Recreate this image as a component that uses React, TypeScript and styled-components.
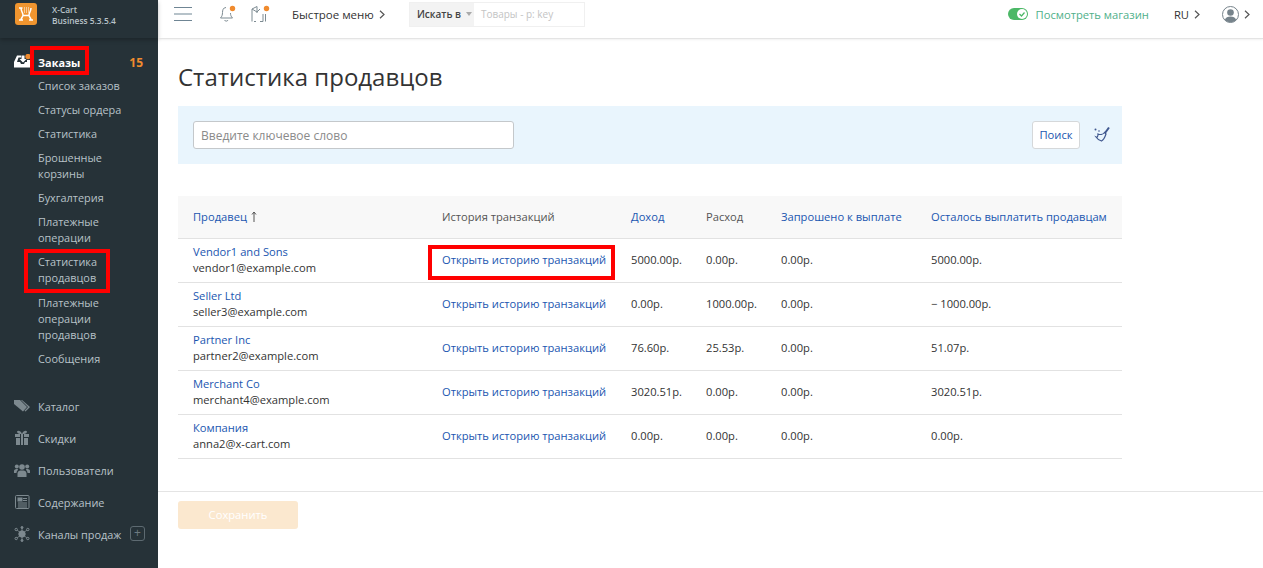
import { ReactNode } from 'react';
import styled, { createGlobalStyle } from 'styled-components';

const GlobalStyle = createGlobalStyle`
  html, body {
    margin: 0;
    padding: 0;
    background: #fff;
    font-family: "Open Sans", "Liberation Sans", sans-serif;
    font-size: 11.2px;
    color: #333;
  }
`;

const Page = styled.div`
  display: flex;
  width: 1263px;
  height: 568px;
  overflow: hidden;
`;

const Sidebar = styled.aside`
  width: 158px;
  flex: none;
  background: #263238;
  color: #b8c2c8;
  font-size: 10.9px;
`;

const Brand = styled.div`
  display: flex;
  align-items: center;
  height: 38px;
  padding: 0 0 10px 15px;
  box-sizing: border-box;
  gap: 15px;
  box-shadow: 0 2px 4px rgba(0, 0, 0, 0.25);
`;

const BrandText = styled.div`
  padding-top: 2px;
  font-size: 8.4px;
  font-weight: 600;
  line-height: 11px;
  color: #b8c2c8;
`;

const Menu = styled.nav`
  padding-top: 8px;
`;

const MainItem = styled.div<{ $active?: boolean }>`
  position: relative;
  display: flex;
  align-items: center;
  height: 32px;
  padding-left: 38px;
  color: ${(p) => (p.$active ? '#fff' : '#b8c2c8')};
  font-weight: ${(p) => (p.$active ? 700 : 400)};
`;

const MainIcon = styled.span`
  position: absolute;
  left: 14px;
  top: 8px;
  width: 16px;
  height: 16px;
`;

const Count = styled.span`
  margin-left: auto;
  margin-right: 15px;
  color: #f08b2e;
  font-size: 12px;
  font-weight: 700;
`;

const SubList = styled.div`
  padding: 0 0 19px 38px;
  margin-top: -4px;
`;

const SubItem = styled.div<{ $wide?: boolean }>`
  padding: ${(p) => (p.$wide ? 5 : 4)}px 0 4px;
  line-height: 16px;
  white-space: pre;
`;

const Marked = styled.span<{ $inset: string }>`
  position: relative;
  &::after {
    content: '';
    position: absolute;
    inset: ${(p) => p.$inset};
    border: 4px solid #f00;
    pointer-events: none;
  }
`;

const BlockMarked = styled(Marked)`
  display: inline-block;
`;

const PlusBox = styled.span`
  position: absolute;
  left: 130px;
  top: 8px;
  width: 13px;
  height: 13px;
  border: 1px solid #5d6a71;
  border-radius: 3px;
  color: #6d7a81;
  font-size: 12px;
  line-height: 12px;
  text-align: center;
`;

const Main = styled.div`
  flex: 1;
  display: flex;
  flex-direction: column;
  min-width: 0;
`;

const TopBar = styled.header`
  display: flex;
  align-items: center;
  height: 39px;
  padding: 0 0 10px 16px;
  box-sizing: border-box;
  border-bottom: 1px solid #e4e4e4;
  box-shadow: 0 1px 2px rgba(0, 0, 0, 0.06);
  flex: none;
`;

const IconSlot = styled.span<{ $ml?: number }>`
  display: inline-flex;
  margin-left: ${(p) => p.$ml ?? 0}px;
`;

const QuickMenu = styled.span`
  margin-left: 22px;
  color: #333;
  white-space: nowrap;
  font-size: 11.5px;
`;

const Chevron = styled.svg`
  width: 6px;
  height: 9px;
  margin-left: 5px;
  fill: none;
  stroke: #555;
  stroke-width: 1.2;
`;

const SearchBox = styled.div`
  display: flex;
  margin-left: 24px;
  height: 25px;
  width: 176px;
  border: 1px solid #f0f0f0;
  box-sizing: border-box;
  font-size: 10px;
`;

const SearchScope = styled.div`
  width: 64px;
  display: flex;
  align-items: center;
  padding-left: 7px;
  box-sizing: border-box;
  background: #f3f3f3;
  font-weight: 600;
  color: #444;
  white-space: nowrap;
`;

const Caret = styled.span`
  margin-left: 5px;
  border: 3.5px solid transparent;
  border-top: 4px solid #aaa;
  border-bottom: 0;
`;

const SearchHint = styled.div`
  display: flex;
  align-items: center;
  padding-left: 7px;
  color: #c4c4c4;
  white-space: nowrap;
`;

const TopRight = styled.div`
  margin-left: auto;
  display: flex;
  align-items: center;
  padding-right: 13px;
`;

const ShopLink = styled.span`
  margin-left: 8px;
  color: #4fb08a;
  white-space: nowrap;
`;

const Lang = styled.span`
  margin-left: 25px;
  color: #333;
`;

const Content = styled.main`
  padding: 0 141px 0 20px;
  flex: 1;
`;

const Title = styled.h1`
  margin: 21px 0 12px;
  font-size: 24px;
  line-height: 34px;
  font-weight: 400;
  color: #333;
`;

const FilterPanel = styled.div`
  display: flex;
  align-items: center;
  height: 58px;
  padding: 0 11px 1px 15px;
  background: #e9f5fd;
  box-sizing: border-box;
`;

const KeywordInput = styled.div`
  width: 321px;
  height: 28px;
  box-sizing: border-box;
  border: 1px solid #c4c8cb;
  border-radius: 3px;
  background: #fff;
  color: #8a8a8a;
  font-size: 12px;
  line-height: 27px;
  padding-left: 7px;
`;

const SearchButton = styled.div`
  margin-left: auto;
  width: 48px;
  height: 28px;
  box-sizing: border-box;
  border: 1px solid #d5d8da;
  border-radius: 3px;
  background: #fff;
  color: #1a56b0;
  font-size: 11.2px;
  line-height: 26px;
  text-align: center;
`;

const Table = styled.table`
  width: 944px;
  margin-top: 32px;
  border-collapse: collapse;
  table-layout: fixed;
`;

const Th = styled.th<{ $link?: boolean }>`
  height: 42px;
  padding: 0 0 0 15px;
  box-sizing: border-box;
  background: #f8f8f8;
  border-bottom: 1px solid #e2e2e2;
  text-align: left;
  font-weight: 400;
  font-size: 11.16px;
  white-space: nowrap;
  color: ${(p) => (p.$link ? '#1a56b0' : '#555')};
`;

const Td = styled.td`
  height: 44px;
  padding: 0 0 0 15px;
  box-sizing: border-box;
  border-bottom: 1px solid #e2e2e2;
  font-size: 11.16px;
  line-height: 16px;
  white-space: nowrap;
  color: #333;
`;

const VendorName = styled.div`
  color: #1a56b0;
`;

const HistoryLink = styled.span`
  color: #1a56b0;
`;

const SortArrow = styled.svg`
  width: 6px;
  height: 11px;
  margin-left: 4px;
  vertical-align: -1px;
  fill: none;
  stroke: #555;
`;

const Footer = styled.div`
  margin: 32px -141px 0 -20px;
  padding: 9px 0 0 20px;
  border-top: 1px solid #e4e4e4;
`;

const SaveButton = styled.div`
  width: 120px;
  height: 28px;
  border-radius: 3px;
  background: #fbe8cf;
  color: #fff;
  font-size: 11.2px;
  line-height: 28px;
  text-align: center;
`;

const LogoIcon = () => (
  <svg width="22" height="22" viewBox="0 0 22 22">
    <rect width="22" height="22" rx="3" fill="#f0952f" />
    <path d="M4 5h3.500M6 5c0 3 2 5 2 7 0 2-2 3-2 5M16 5c0 3-2 5-2 7 0 2 2 3 2 5M4 17h4M14 17h4M8 12.500h6" fill="none" stroke="#fff" strokeWidth="1.5" />
    <path d="M9 5h5M9 7h5M9 9h5" stroke="#fff" strokeWidth="1" strokeDasharray="1 1" />
  </svg>
);

const OrdersIcon = () => (
  <svg width="20" height="16" viewBox="0 0 20 16">
    <path d="M3 1.500h4v2H4.500L3 8h3l1 2h3l1-2h2V6h3v7.500H0V8z" fill="#fff" />
    <path d="M7.500 1.500h3v3.500h2L9 8.500 5.500 5h2z" fill="#fff" />
    <circle cx="14" cy="2.500" r="2.700" fill="#f08b2e" />
  </svg>
);

const TagIcon = () => (
  <svg width="16" height="16" viewBox="0 0 16 16" fill="#7d898f">
    <path d="M0 2h6l7 7-4 4.500L0 6z" />
    <path d="M8 2l8 7-4.500 4.500-1-.8L14 9 7 2z" />
  </svg>
);

const GiftIcon = () => (
  <svg width="16" height="16" viewBox="0 0 16 16" fill="#7d898f">
    <path d="M1 4h5v3H1zM10 4h5v3h-5zM2 8h4v7H2zM10 8h4v7h-4zM7 4h2v11H7z" />
    <path d="M3 1.500C4 0 7 1 8 4 5 4 3 3.500 3 1.500zM13 1.500C12 0 9 1 8 4c3 0 5-.5 5-2.500z" />
  </svg>
);

const UsersIcon = () => (
  <svg width="16" height="16" viewBox="0 0 16 16" fill="#7d898f">
    <circle cx="8" cy="5" r="2.800" />
    <circle cx="2.800" cy="4.500" r="2" />
    <circle cx="13.200" cy="4.500" r="2" />
    <path d="M3.500 15v-3.500C3.500 9 5.500 8.500 8 8.500s4.500.5 4.500 3V15zM0 11V9c0-1.500 1.500-2 3.500-2 .5 0 .8.5 0 1.500-.5.5-1 1.500-1 2.500zM16 11V9c0-1.500-1.500-2-3.500-2-.5 0-.8.5 0 1.500.5.5 1 1.500 1 2.500z" />
  </svg>
);

const NewsIcon = () => (
  <svg width="16" height="16" viewBox="0 0 16 16" fill="none" stroke="#7d898f">
    <rect x="1.500" y="1.500" width="13.500" height="13" rx="1" />
    <rect x="4" y="4" width="4" height="3" fill="#7d898f" />
    <path d="M9 4.500h4M9 6.500h4M4 9h9M4 11h9M4 13h9" />
  </svg>
);

const HubIcon = () => (
  <svg width="16" height="16" viewBox="0 0 16 16" fill="none" stroke="#7d898f">
    <circle cx="8" cy="8" r="3.200" fill="#7d898f" />
    <path d="M8 8 3 4M8 8l5-4M8 8l-5 4M8 8l5 4M8 8V2M8 8v6" strokeWidth="0.8" />
    <circle cx="2.200" cy="3.500" r="1.200" />
    <circle cx="13.800" cy="3.500" r="1.200" />
    <circle cx="2.200" cy="12.500" r="1.200" />
    <circle cx="13.800" cy="12.500" r="1.200" />
    <circle cx="8" cy="1.500" r="1" fill="#7d898f" />
    <circle cx="8" cy="14.500" r="1" fill="#7d898f" />
  </svg>
);

const BurgerIcon = () => (
  <svg width="18" height="16" viewBox="0 0 18 16" stroke="#6f8594" strokeWidth="1.2">
    <path d="M0 1.500h18M0 8h18M0 14.500h18" />
  </svg>
);

const BellIcon = () => (
  <svg width="18" height="18" viewBox="0 0 18 18" fill="none">
    <path d="M7 2.500c-3 0-3.500 3-3.500 5s-.5 4-2 5.500h12c-1.500-1.500-2-3-2-5M5.500 15c.5 1.500 3 1.500 3.500 0" stroke="#7d8b92" />
    <circle cx="13.500" cy="3.500" r="2.700" fill="#f08b2e" />
  </svg>
);

const ChartIcon = () => (
  <svg width="19" height="18" viewBox="0 0 19 18" fill="none" stroke="#7d8b92">
    <path d="M1 16.500V4l5-2.500V8M1 4l5 3 3-3M5 16.500H3M12 9v7.500h-3M14.500 9v7.500" />
    <circle cx="15.500" cy="3.500" r="2.700" fill="#f08b2e" stroke="none" />
  </svg>
);

const Arrow = () => (
  <Chevron viewBox="0 0 6 9">
    <path d="M1 .8 5 4.500 1 8.200" />
  </Chevron>
);

const SwitchIcon = () => (
  <svg width="20" height="12" viewBox="0 0 20 12">
    <rect width="20" height="12" rx="6" fill="#4cb867" />
    <circle cx="14" cy="6" r="5" fill="#fff" />
    <path d="M11.500 6l2 2 3-3.500" fill="none" stroke="#4cb867" strokeWidth="1.2" />
  </svg>
);

const UserIcon = () => (
  <svg width="17" height="17" viewBox="0 0 17 17">
    <circle cx="8.500" cy="8.500" r="8" fill="#fff" stroke="#76838b" />
    <circle cx="8.500" cy="6.500" r="3.300" fill="#76838b" />
    <path d="M2.800 14c1-3 3-3.500 5.700-3.500s4.700.5 5.700 3.500c-3 3-8.400 3-11.400 0z" fill="#76838b" />
  </svg>
);

const BroomIcon = () => (
  <svg width="18" height="18" viewBox="0 0 18 18" fill="none" stroke="#40588f" strokeWidth="1.2">
    <path d="M5 8c2 1 5 .5 6.500-1.500L13 8c-1 3-2.500 6-4.500 7-2-.5-4.500-2.500-5.500-4 1 .5 2 0 2-3z" />
    <path d="M12 7l4-5.500" strokeWidth="2" />
    <circle cx="2.500" cy="3.500" r="1" fill="#40588f" stroke="none" />
    <circle cx="6" cy="5" r=".8" fill="#40588f" stroke="none" />
  </svg>
);

const subItems: { content: ReactNode; wide?: boolean }[] = [
  { content: 'Список заказов' },
  { content: 'Статусы ордера' },
  { content: 'Статистика' },
  { content: 'Брошенные\nкорзины' },
  { content: 'Бухгалтерия' },
  { content: 'Платежные\nоперации' },
  {
    content: (
      <BlockMarked $inset="-5px -13px -7px -14px">
        Статистика{'\n'}продавцов
      </BlockMarked>
    ),
  },
  { content: 'Платежные\nоперации\nпродавцов', wide: true },
  { content: 'Сообщения' },
];

const lowerItems = [
  { label: 'Каталог', icon: <TagIcon /> },
  { label: 'Скидки', icon: <GiftIcon /> },
  { label: 'Пользователи', icon: <UsersIcon /> },
  { label: 'Содержание', icon: <NewsIcon /> },
  { label: 'Каналы продаж', icon: <HubIcon />, plus: true },
];

const vendors = [
  { name: 'Vendor1 and Sons', email: 'vendor1@example.com', income: '5000.00р.', expense: '0.00р.', left: '5000.00р.', marked: true },
  { name: 'Seller Ltd', email: 'seller3@example.com', income: '0.00р.', expense: '1000.00р.', left: '− 1000.00р.' },
  { name: 'Partner Inc', email: 'partner2@example.com', income: '76.60р.', expense: '25.53р.', left: '51.07р.' },
  { name: 'Merchant Co', email: 'merchant4@example.com', income: '3020.51р.', expense: '0.00р.', left: '3020.51р.' },
  { name: 'Компания', email: 'anna2@x-cart.com', income: '0.00р.', expense: '0.00р.', left: '0.00р.' },
];

const App = () => (
  <>
    <GlobalStyle />
    <Page>
      <Sidebar>
        <Brand>
          <LogoIcon />
          <BrandText>
            X-Cart
            <br />
            Business 5.3.5.4
          </BrandText>
        </Brand>
        <Menu>
          <MainItem $active>
            <MainIcon>
              <OrdersIcon />
            </MainIcon>
            <Marked $inset="-9px -9px -5px -8px">Заказы</Marked>
            <Count>15</Count>
          </MainItem>
          <SubList>
            {subItems.map((item, i) => (
              <SubItem key={i} $wide={item.wide}>
                {item.content}
              </SubItem>
            ))}
          </SubList>
          {lowerItems.map((item) => (
            <MainItem key={item.label}>
              <MainIcon>{item.icon}</MainIcon>
              {item.label}
              {item.plus && <PlusBox>+</PlusBox>}
            </MainItem>
          ))}
        </Menu>
      </Sidebar>
      <Main>
        <TopBar>
          <BurgerIcon />
          <IconSlot $ml={27}>
            <BellIcon />
          </IconSlot>
          <IconSlot $ml={14}>
            <ChartIcon />
          </IconSlot>
          <QuickMenu>
            Быстрое меню
            <Arrow />
          </QuickMenu>
          <SearchBox>
            <SearchScope>
              Искать в<Caret />
            </SearchScope>
            <SearchHint>Товары - р: key</SearchHint>
          </SearchBox>
          <TopRight>
            <SwitchIcon />
            <ShopLink>Посмотреть магазин</ShopLink>
            <Lang>
              RU
              <Arrow />
            </Lang>
            <IconSlot $ml={22}>
              <UserIcon />
            </IconSlot>
            <Arrow />
          </TopRight>
        </TopBar>
        <Content>
          <Title>Статистика продавцов</Title>
          <FilterPanel>
            <KeywordInput>Введите ключевое слово</KeywordInput>
            <SearchButton>Поиск</SearchButton>
            <IconSlot $ml={13}>
              <BroomIcon />
            </IconSlot>
          </FilterPanel>
          <Table>
            <colgroup>
              <col width="249" />
              <col width="189" />
              <col width="75" />
              <col width="75" />
              <col width="150" />
              <col width="206" />
            </colgroup>
            <thead>
              <tr>
                <Th $link>
                  Продавец
                  <SortArrow viewBox="0 0 6 11">
                    <path d="M3 11V1M1 3.500 3 1l2 2.500" />
                  </SortArrow>
                </Th>
                <Th>История транзакций</Th>
                <Th $link>Доход</Th>
                <Th>Расход</Th>
                <Th $link>Запрошено к выплате</Th>
                <Th $link>Осталось выплатить продавцам</Th>
              </tr>
            </thead>
            <tbody>
              {vendors.map((v) => (
                <tr key={v.email}>
                  <Td>
                    <VendorName>{v.name}</VendorName>
                    {v.email}
                  </Td>
                  <Td>
                    {v.marked ? (
                      <Marked $inset="-7px -9px -13px -14px">
                        <HistoryLink>Открыть историю транзакций</HistoryLink>
                      </Marked>
                    ) : (
                      <HistoryLink>Открыть историю транзакций</HistoryLink>
                    )}
                  </Td>
                  <Td>{v.income}</Td>
                  <Td>{v.expense}</Td>
                  <Td>0.00р.</Td>
                  <Td>{v.left}</Td>
                </tr>
              ))}
            </tbody>
          </Table>
          <Footer>
            <SaveButton>Сохранить</SaveButton>
          </Footer>
        </Content>
      </Main>
    </Page>
  </>
);

export default App;
